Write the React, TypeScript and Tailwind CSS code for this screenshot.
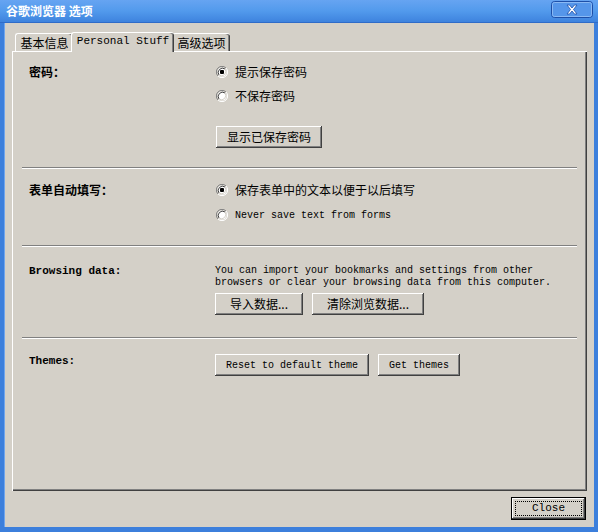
import React from 'react';

const cjk = "font-['Noto_Sans_CJK_SC',sans-serif] text-[12px]";
const mono = "font-['Liberation_Mono','Noto_Sans_CJK_SC',monospace] text-[10px]";
const raised =
  'bg-[#d4d0c8] shadow-[inset_-1px_-1px_#404040,inset_1px_1px_#ffffff,inset_-2px_-2px_#808080]';

function Radio({ checked }: { checked?: boolean }) {
  return (
    <svg width="12" height="12" viewBox="0 0 12 12" className="shrink-0">
      <path d="M10 2 A5.5 5.5 0 0 0 2 10" fill="none" stroke="#808080" />
      <path d="M2 10 A5.5 5.5 0 0 0 10 2" fill="none" stroke="#ffffff" />
      <circle cx="6" cy="6" r="4.5" fill="#ffffff" />
      <path d="M9 3 A4.3 4.3 0 0 0 3 9" fill="none" stroke="#404040" />
      <path d="M3 9 A4.3 4.3 0 0 0 9 3" fill="none" stroke="#d4d0c8" />
      {checked && <rect x="4" y="4" width="4" height="4" rx="1" fill="#000" />}
    </svg>
  );
}

function Btn({ children, className = '' }: { children: React.ReactNode; className?: string }) {
  return (
    <div className={`${raised} h-[22px] flex items-center justify-center text-black ${className}`}>
      {children}
    </div>
  );
}

function Separator() {
  return <div className="h-[2px] border-t border-[#808080] border-b border-b-white mx-[9px] mr-[10px]" />;
}

function Tab({ label, active, className = '' }: { label: string; active?: boolean; className?: string }) {
  return (
    <div
      className={`bg-[#d4d0c8] border-l border-t border-white rounded-tl-[3px] rounded-tr-[3px] shadow-[inset_-1px_0_#404040,inset_-2px_0_#808080] flex items-center justify-center ${
        active ? 'h-[20px] relative z-10 -mx-[2px] mb-[-1px] pb-[2px]' : 'h-[18px]'
      } ${className}`}
    >
      {label}
    </div>
  );
}

export default function App() {
  return (
    <div className="w-[598px] h-[532px] flex flex-col bg-[#3c7fdc] overflow-hidden">
      <div className="h-[23px] shrink-0 bg-gradient-to-b from-[#66a4f2] via-[#529aec] to-[#3e83de] flex items-center justify-between pl-[6px] pr-[6px] border-b border-[#2f6cc8]">
        <span className={`${cjk} font-bold text-white leading-none`}>谷歌浏览器 选项</span>
        <svg width="42" height="18" viewBox="0 0 42 18" className="mb-[3px] mr-[-1px]">
          <rect x="0.5" y="0.5" width="41" height="16" rx="3" fill="#5596ea" stroke="#1d4fa8" />
          <rect x="1.5" y="1.5" width="39" height="14" rx="2" fill="none" stroke="#8ab9f4" />
          <path d="M16 4 L18.5 4 L21 7 L23.5 4 L26 4 L22.5 8.5 L26 13 L23.5 13 L21 10 L18.5 13 L16 13 L19.5 8.5 Z" fill="#ffffff" stroke="#1c4ea8" strokeWidth="0.8" />
        </svg>
      </div>
      <div className="flex-1 flex flex-col mx-[4px] mb-[5px] bg-[#d4d0c8] border-l border-[#6fa5ee] px-[7px] pt-[8px]">
        <div className={`flex items-end pl-[3px] h-[20px] ${cjk} text-black`}>
          <Tab label="基本信息" className="w-[58px]" />
          <Tab label="Personal Stuff" active className={`w-[103px] ${mono} !text-[11px]`} />
          <Tab label="高级选项" className="w-[58px]" />
        </div>
        <div className="h-[440px] border-l border-t border-white shadow-[inset_-1px_-1px_#404040,inset_-2px_-2px_#808080] flex flex-col">
          {/* password */}
          <div className="flex pl-[16px] pt-[12px] pb-[19px]">
            <div className={`w-[187px] ${cjk} font-bold leading-[16px]`}>密码：</div>
            <div className="flex flex-col">
              <div className={`flex items-center gap-[7px] h-[16px] ${cjk}`}>
                <Radio checked />
                <span>提示保存密码</span>
              </div>
              <div className={`flex items-center gap-[7px] h-[16px] mt-[8px] ${cjk}`}>
                <Radio />
                <span>不保存密码</span>
              </div>
              <Btn className={`w-[106px] mt-[22px] ${cjk}`}>显示已保存密码</Btn>
            </div>
          </div>
          <Separator />
          {/* autofill */}
          <div className="flex pl-[16px] pt-[13px] pb-[22px]">
            <div className={`w-[187px] ${cjk} font-bold leading-[16px]`}>表单自动填写：</div>
            <div className="flex flex-col">
              <div className={`flex items-center gap-[7px] h-[16px] ${cjk}`}>
                <Radio checked />
                <span>保存表单中的文本以便于以后填写</span>
              </div>
              <div className={`flex items-center gap-[7px] h-[16px] mt-[9px] ${mono}`}>
                <Radio />
                <span>Never save text from forms</span>
              </div>
            </div>
          </div>
          <Separator />
          {/* browsing data */}
          <div className="flex pl-[16px] pt-[18px] pb-[22px]">
            <div className={`w-[186px] ${mono} !text-[11px] font-bold leading-[12px]`}>Browsing data:</div>
            <div className="flex flex-col">
              <div className={`${mono} leading-[12px] whitespace-pre`}>
                {'You can import your bookmarks and settings from other\nbrowsers or clear your browsing data from this computer.'}
              </div>
              <div className="flex gap-[9px] mt-[4px]">
                <Btn className={`w-[88px] ${cjk}`}>导入数据...</Btn>
                <Btn className={`w-[112px] ${cjk}`}>清除浏览数据...</Btn>
              </div>
            </div>
          </div>
          <Separator />
          {/* themes */}
          <div className="flex pl-[16px] pt-[15px]">
            <div className={`w-[186px] ${mono} !text-[11px] font-bold leading-[14px]`}>Themes:</div>
            <div className="flex gap-[9px]">
              <Btn className={`w-[154px] ${mono}`}>Reset to default theme</Btn>
              <Btn className={`w-[82px] ${mono}`}>Get themes</Btn>
            </div>
          </div>
        </div>
        <div className="flex justify-end pt-[6px] pr-[1px]">
          <div className="w-[75px] h-[23px] border border-black">
            <div className={`${raised} w-full h-full p-[3px]`}>
              <div className={`w-full h-full border border-dotted border-black flex items-center justify-center ${mono} !text-[11px]`}>
                Close
              </div>
            </div>
          </div>
        </div>
      </div>
    </div>
  );
}
